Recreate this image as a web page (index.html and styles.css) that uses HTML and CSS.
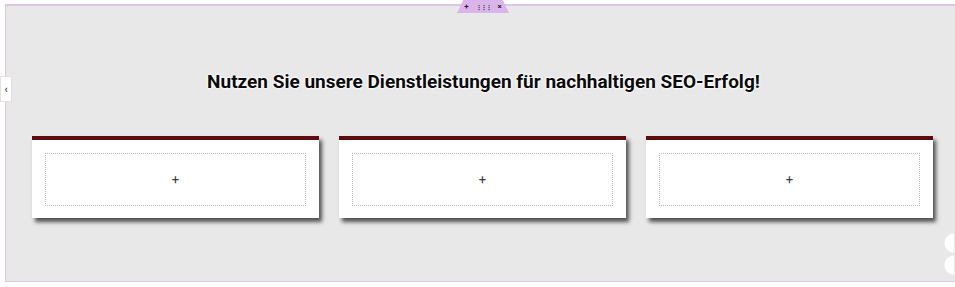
FILE: index.html
```html
<!doctype html>
<html>
<head>
    <meta charset="UTF-8">
    <title>SEO-Dienstleistungen</title>
    <link rel="stylesheet" href="styles.css">
</head>
<body>

<div class="section">
    <div class="section-handle">
        <span class="handle-icon">+</span>
        <span class="handle-icon dots">&#8942;&#8942;&#8942;</span>
        <span class="handle-icon">&times;</span>
    </div>
    <div class="side-toggle">&lsaquo;</div>

    <h2 class="headline">Nutzen Sie unsere Dienstleistungen für nachhaltigen SEO-Erfolg!</h2>

    <div class="cards">
        <div class="card"><div class="drop-zone">+</div></div>
        <div class="card"><div class="drop-zone">+</div></div>
        <div class="card"><div class="drop-zone">+</div></div>
    </div>

    <div class="side-bump"></div>
</div>

</body>
</html>
```

FILE: styles.css
```css
html, body {
    margin: 0;
    background: #fff;
    overflow: hidden;
}
body {
    font-family: Roboto, "Liberation Sans", sans-serif;
    color: #111;
}
.section {
    position: relative;
    box-sizing: border-box;
    margin-top: 4px;
    margin-left: 5px;
    width: 960px;
    height: 278px;
    background: #e8e8e8;
    border: 1px solid #dcc6e4;
    border-top-width: 2px;
    padding-top: 64px;
}
.section-handle {
    position: absolute;
    top: -6px;
    left: 451px;
    width: 44px;
    height: 13px;
    padding: 0 4px;
    background: #dcb4ec;
    clip-path: polygon(12% 0, 88% 0, 100% 100%, 0 100%);
    display: flex;
    justify-content: center;
    align-items: center;
    gap: 7px;
    font-size: 8px;
    font-weight: 700;
    line-height: 1;
    color: #222;
}
.handle-icon.dots {
    font-size: 6px;
    letter-spacing: -1px;
}
.side-toggle {
    position: absolute;
    left: -6px;
    top: 70px;
    width: 12px;
    height: 26px;
    background: #fff;
    border: 1px solid #e2e2e2;
    box-sizing: border-box;
    display: flex;
    align-items: center;
    justify-content: center;
    font-size: 10px;
    font-weight: 700;
    color: #333;
}
.headline {
    margin: 0;
    width: 955px;
    text-align: center;
    font-size: 19px;
    font-weight: 700;
    line-height: 24px;
    color: #0b0b0b;
    text-shadow: 0 0 3px #fff, 0 0 3px #fff, 0 0 2px #fff;
}
.cards {
    display: flex;
    gap: 20px;
    margin-top: 42px;
    padding-left: 26px;
}
.card {
    box-sizing: border-box;
    width: 287px;
    height: 82px;
    background: #fff;
    border-top: 4px solid #5c0b0e;
    padding: 13px 13px 12px;
    box-shadow: 3px 4px 4px rgba(0, 0, 0, 0.65);
}
.drop-zone {
    box-sizing: border-box;
    height: 100%;
    border: 1px dotted #b8b8b8;
    display: flex;
    align-items: center;
    justify-content: center;
    font-size: 13px;
    color: #3a3a3a;
}
.side-bump {
    position: absolute;
    right: 10px;
    top: 226px;
    width: 12px;
    height: 44px;
    background:
        radial-gradient(circle at 100% 25%, #fff 9px, transparent 10px),
        radial-gradient(circle at 100% 75%, #fff 9px, transparent 10px);
}
```
